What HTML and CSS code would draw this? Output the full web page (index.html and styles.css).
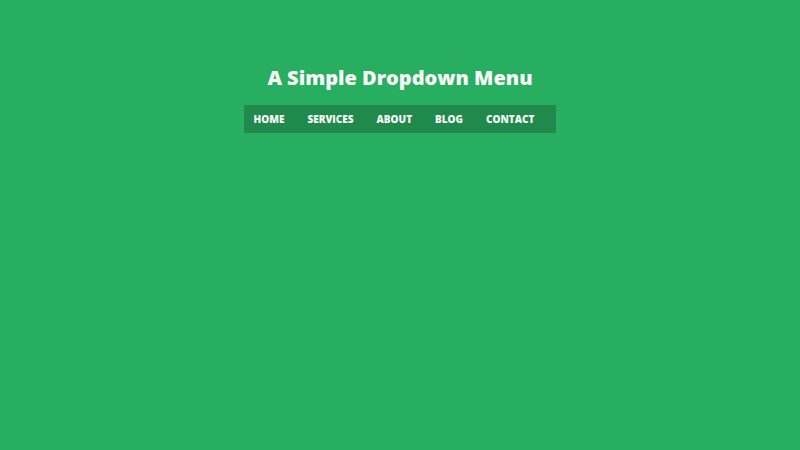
FILE: index.html
```html
<!DOCTYPE html>
<html lang="en">
<head>
    <meta charset="UTF-8">
    <meta name="viewport" content="width=device-width, initial-scale=1.0">
    <title>A Simple Dropdown Menu</title>
    <link rel="stylesheet" href="styles.css">
</head>
<body>
    <h1>A Simple Dropdown Menu</h1>
    <nav class="menu">
        <ul>
            <li><a href="#">Home</a></li>
            <li><a href="#">Services</a></li>
            <li><a href="#">About</a></li>
            <li><a href="#">Blog</a></li>
            <li><a href="#">Contact</a></li>
        </ul>
    </nav>
</body>
</html>
```
FILE: styles.css
```css
body {
    font-family: "Open Sans", Arial, sans-serif;
    background-color: #27ae60;
    margin: 0;
    padding: 58px 0 0;
    color: #f7f7f7;
}
h1 {
    text-align: center;
    font-size: 20px;
    font-weight: 800;
    line-height: 40px;
    margin: 0 0 7px;
}
.menu {
    display: flex;
    justify-content: center;
}
.menu ul {
    display: flex;
    gap: 3px;
    list-style: none;
    margin: 0;
    padding: 0 12px 0 0;
    background-color: #208a4d;
}
.menu a {
    display: block;
    padding: 0 10px;
    line-height: 28px;
    font-size: 10px;
    font-weight: 800;
    text-transform: uppercase;
    text-decoration: none;
    color: #f7f7f7;
}
```
